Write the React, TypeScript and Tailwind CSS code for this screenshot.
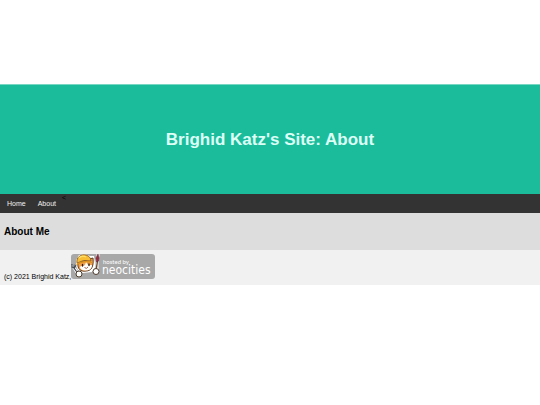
function NeocitiesBadge() {
  return (
    <svg viewBox="0 0 84 25" className="h-[25px] w-[84px]" role="img" aria-label="Hosted by Neocities">
      <rect width="84" height="25" rx="3" fill="#a8a8a8" />
      <path d="M5 12 5 6 8 1 14 0 19 2 23 2 24 9 24 14 21 18 12 19 7 16Z" fill="#fff" />
      <path d="M27 1 26 8 26 16M2 12 7 20" fill="none" stroke="#fff" strokeWidth="3" strokeLinecap="round" />
      <path d="M7 9C6 15 10 18 15 17 20 17 23 13 22 4L18 5Z" fill="#f3a04c" stroke="#5d3a20" strokeWidth="1" />
      <path d="M9 13C10 11 12 13 14 11L15 8 17 11C19 12 21 10 21 12 20 16 17 16.500 14 16.500 11 16.500 9 15 9 13Z" fill="#fff" />
      <path d="M6 9C5 3 10 0 15 1 18 2 20 4 20 7Q12 5 6 9Z" fill="#f9bd35" stroke="#8a5b20" strokeWidth=".9" />
      <path d="M5 10Q11 5 22 8L21 9Q12 7 6 11Z" fill="#dc921c" />
      <path d="M8 4Q11 1 15 3" fill="none" stroke="#ffe16c" strokeWidth="1.3" />
      <path d="M11.500 10.500v1.500M18 10v1.500" stroke="#2d1d18" strokeWidth="1.4" strokeLinecap="round" />
      <path d="M13.500 13.500Q15.500 15.500 17 13" fill="none" stroke="#8c3920" strokeWidth=".8" />
      <path d="M1 10 1 13 3.500 14 5 11M3 10.500V14L8 21" fill="none" stroke="#454b50" strokeWidth="1.2" />
      <path d="M26.500 7 25 17" stroke="#68452b" strokeWidth="1.4" />
      <path d="M27 0 28 4 27.500 7 25.500 8 25 4Z" fill="#9a293d" stroke="#602635" strokeWidth=".6" />
      <circle cx="8" cy="20" r="3" fill="#fff" stroke="#4f3b2b" strokeWidth="1" />
      <circle cx="25" cy="17.500" r="3" fill="#fff" stroke="#4f3b2b" strokeWidth="1" />
      <text x="32" y="10" fill="#fff" fontSize="6" className="font-[Lato,sans-serif]">hosted by</text>
      <text x="31" y="20" fill="#fff" fontSize="12" className="font-['DejaVu_Sans_Condensed','DejaVu_Sans',sans-serif]">neocities</text>
    </svg>
  );
}

export default function App() {
  return (
    <div className="bg-white pt-[84px] font-['Liberation_Sans',Arial,sans-serif] text-[7px] leading-2 text-black">
      <header className="border-t border-[#77d7c2] bg-[#1abc9c] pt-[45px] pb-11 text-center text-[#ddfff6]">
        <h1 className="text-[17px] leading-5 font-bold">Brighid Katz's Site: About</h1>
      </header>
      <nav className="flex h-[19px] items-start bg-[#333] text-[#f2f2f2]">
        <a href="#home" className="py-1.5 pr-[6px] pl-[7px]">Home</a>
        <a href="#about" className="px-[6px] py-1.5">About</a>
        <span className="text-black">&lt;</span>
      </nav>
      <main className="bg-[#ddd] px-1 pt-[13px] pb-3">
        <h2 className="text-[10px] leading-3 font-bold">About Me</h2>
      </main>
      <footer className="flex items-end bg-[#f1f1f1] px-1 pt-1 pb-1.5">
        <p className="leading-[5px]">(c) 2021 Brighid Katz,</p>
        <a href="#neocities"><NeocitiesBadge /></a>
      </footer>
    </div>
  );
}
